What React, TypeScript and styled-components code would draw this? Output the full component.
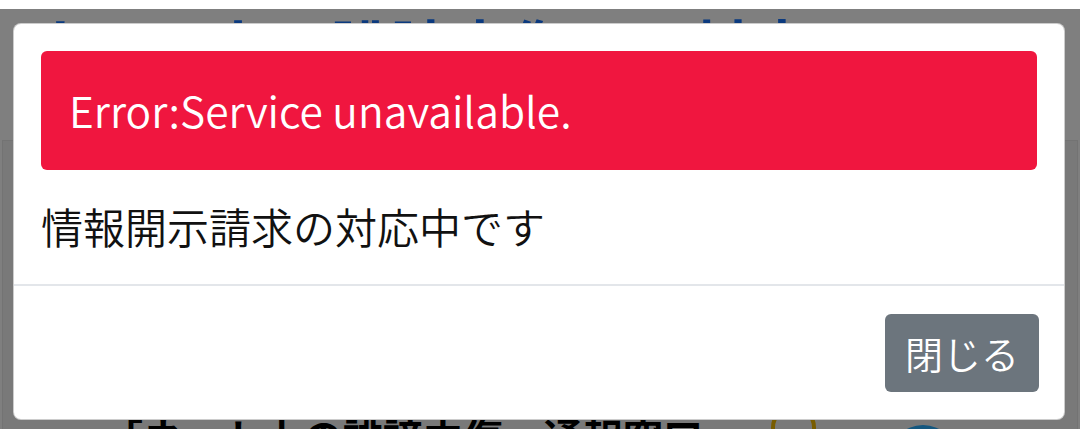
import styled, { createGlobalStyle } from "styled-components"

const GlobalStyle = createGlobalStyle`
  html, body {
    margin: 0;
    padding: 0;
    background: #ffffff;
    font-family: "Noto Sans CJK JP", "Noto Sans", sans-serif;
  }
  * {
    box-sizing: border-box;
  }
`

const Page = styled.div`
  position: relative;
  width: 1080px;
  height: 429px;
  overflow: hidden;
  background: #ffffff;
`

const SiteHeader = styled.header`
  height: 140px;
  padding: 9px 0 0 30px;
`

const SiteTitle = styled.h1`
  margin: 0;
  font-size: 60px;
  line-height: 1.2;
  font-weight: 700;
  color: #1674ff;
  white-space: nowrap;
`

const Content = styled.section`
  margin: 0 2px;
  height: 289px;
  border: 1px solid #e6e6e6;
  border-bottom: none;
  background: #f3f3f3;
  padding: 266px 0 0 100px;
`

const Row = styled.div`
  display: flex;
  align-items: flex-start;
`

const Lead = styled.p`
  margin: 0;
  width: 668px;
  font-size: 40px;
  font-weight: 700;
  color: #000000;
  white-space: nowrap;
`

const Badge = styled.span<{ $fill?: string; $ring?: string; $size: number }>`
  flex: none;
  width: ${p => p.$size}px;
  height: ${p => p.$size}px;
  margin-top: ${p => (p.$ring ? -2 : 18)}px;
  margin-right: 72px;
  border-radius: 50%;
  background: ${p => p.$fill ?? "transparent"};
  border: ${p => (p.$ring ? `4px solid ${p.$ring}` : "none")};
`

const Overlay = styled.div`
  position: absolute;
  top: 9px;
  left: 0;
  right: 0;
  bottom: 0;
  background: rgba(0, 0, 0, 0.5);
  padding: 14px 15px 0 13px;
`

const Modal = styled.div`
  display: flex;
  flex-direction: column;
  width: 1052px;
  background: #ffffff;
  border: 1px solid rgba(0, 0, 0, 0.2);
  border-radius: 8px;
`

const ModalBody = styled.div`
  padding: 27px 27px 28px;
  border-bottom: 2px solid #e3e6ea;
`

const Alert = styled.div`
  margin-bottom: 26px;
  padding: 29px 28px 30px;
  border-radius: 6px;
  background: #f0163f;
  color: #ffffff;
  font-size: 42.5px;
  font-weight: 350;
  line-height: 60px;
`

const Message = styled.p`
  margin: 0;
  font-size: 42px;
  font-weight: 350;
  line-height: 60px;
  color: #111111;
`

const ModalFooter = styled.div`
  display: flex;
  justify-content: flex-end;
  padding: 28px 25px 27px;
`

const Button = styled.button`
  height: 78px;
  padding: 0 20px;
  border: none;
  border-radius: 6px;
  background: #6c757d;
  color: #ffffff;
  font-family: inherit;
  font-size: 38px;
  font-weight: 350;
  line-height: 60px;
  cursor: pointer;
`

export default function App() {
  return (
    <>
      <GlobalStyle />
      <Page>
        <SiteHeader>
          <SiteTitle>ネット上の誹謗中傷への対応</SiteTitle>
        </SiteHeader>
        <Content>
          <Row>
            <Lead>「ネット上の誹謗中傷・通報窓口」</Lead>
            <Badge $ring="#f0b800" $size={45} />
            <Badge $fill="#28aefe" $size={70} />
          </Row>
        </Content>

        <Overlay>
          <Modal role="dialog">
            <ModalBody>
              <Alert>Error:Service unavailable.</Alert>
              <Message>情報開示請求の対応中です</Message>
            </ModalBody>
            <ModalFooter>
              <Button>閉じる</Button>
            </ModalFooter>
          </Modal>
        </Overlay>
      </Page>
    </>
  )
}
